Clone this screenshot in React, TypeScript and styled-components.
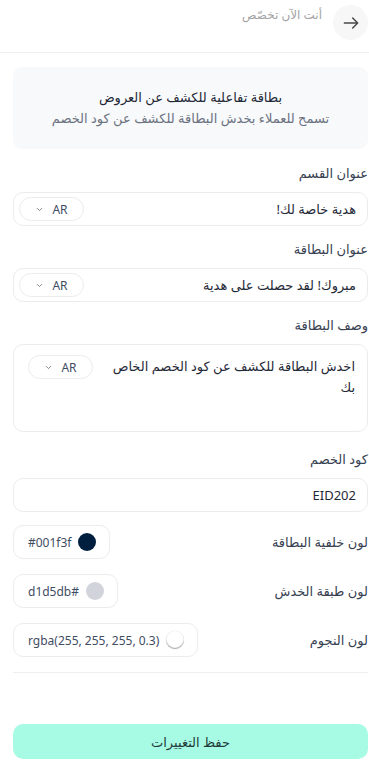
import React from 'react';
import styled, { createGlobalStyle } from 'styled-components';

const GlobalStyle = createGlobalStyle`
  * { box-sizing: border-box; }
  body {
    margin: 0;
    background: #ffffff;
    font-family: "Noto Sans", "DejaVu Sans", sans-serif;
    color: #1f2937;
  }
`;

const Page = styled.div`
  width: 369px;
  direction: rtl;
  overflow: hidden;
`;

const Header = styled.div`
  height: 53px;
  display: flex;
  align-items: flex-start;
  gap: 11px;
  padding: 5px 1px 0 0;
  border-bottom: 1px solid #eeeeee;
`;

const BackButton = styled.div`
  width: 35px;
  height: 35px;
  border-radius: 50%;
  background: #f7f7f7;
  display: flex;
  align-items: center;
  justify-content: center;
  color: #444;
`;

const HeaderText = styled.span`
  font-size: 12px;
  color: #a3a3a3;
  line-height: 20px;
`;

const Content = styled.div`
  padding: 14px 1px 0 13px;
  display: flex;
  flex-direction: column;
`;

const InfoCard = styled.div`
  height: 82px;
  background: #f8f9fb;
  border-radius: 9px;
  display: flex;
  flex-direction: column;
  align-items: center;
  justify-content: center;
  gap: 2px;
  margin-bottom: 14px;
`;

const InfoTitle = styled.div`
  font-size: 13px;
  color: #1f2937;
  line-height: 19px;
`;

const InfoSub = styled.div`
  font-size: 13px;
  color: #6b7280;
  line-height: 19px;
`;

const Field = styled.div<{ $gap?: number }>`
  display: flex;
  flex-direction: column;
  margin-bottom: ${(p) => p.$gap ?? 13}px;
`;

const Label = styled.label`
  font-size: 13px;
  line-height: 20px;
  color: #374151;
  margin-bottom: 9px;
  white-space: nowrap;
`;

const InputBox = styled.div<{ $tall?: boolean }>`
  height: ${(p) => (p.$tall ? 88 : 34)}px;
  border: 1px solid #ececec;
  border-radius: 10px;
  display: flex;
  align-items: ${(p) => (p.$tall ? 'flex-start' : 'center')};
  justify-content: space-between;
  padding: ${(p) => (p.$tall ? '10px 12px 0 14px' : '0 11px 0 5px')};
  font-size: 13px;
  color: #1f2937;
`;

const InputText = styled.span<{ $tall?: boolean }>`
  line-height: 21px;
  padding-top: ${(p) => (p.$tall ? 1 : 0)}px;
  max-width: 252px;
`;

const LangPill = styled.div`
  width: 65px;
  height: 24px;
  border: 1px solid #ececec;
  border-radius: 12px;
  display: flex;
  align-items: center;
  justify-content: center;
  gap: 8px;
  direction: ltr;
  font-size: 12px;
  color: #3f4d63;
  flex-shrink: 0;
`;

const ColorRow = styled.div`
  display: flex;
  align-items: center;
  justify-content: space-between;
  margin-bottom: 15px;
`;

const ColorLabel = styled.span`
  font-size: 13px;
  color: #374151;
`;

const ColorBox = styled.div`
  height: 34px;
  border: 1px solid #ececec;
  border-radius: 10px;
  display: flex;
  align-items: center;
  gap: 7px;
  padding: 0 13px 0 14px;
  font-size: 12px;
  color: #3f4d63;
`;

const Swatch = styled.span<{ $color: string; $ring?: boolean }>`
  width: 18px;
  height: 18px;
  border-radius: 50%;
  background: ${(p) => p.$color};
  box-shadow: ${(p) => (p.$ring ? 'inset 0 -1px 1px rgba(0,0,0,0.35), 0 0 0 0.5px #eee' : 'none')};
  flex-shrink: 0;
`;

const Divider = styled.div`
  height: 1px;
  background: #efefef;
  margin-bottom: 51px;
`;

const SaveButton = styled.button`
  height: 35px;
  border: none;
  border-radius: 10px;
  background: #a7fbe4;
  font-family: inherit;
  font-size: 13px;
  color: #1f3b3b;
  width: 100%;
`;

const Chevron = () => (
  <svg width="9" height="9" viewBox="0 0 24 24" fill="none" stroke="#6b7280" strokeWidth="2.2" strokeLinecap="round" strokeLinejoin="round">
    <path d="M6 9l6 6 6-6" />
  </svg>
);

const Arrow = () => (
  <svg width="20" height="20" viewBox="0 0 24 24" fill="none" stroke="#4a4a4a" strokeWidth="1.8" strokeLinecap="round" strokeLinejoin="round">
    <path d="M4 12h16M14 6l6 6-6 6" />
  </svg>
);

const Lang = () => (
  <LangPill>
    <Chevron />
    <span>AR</span>
  </LangPill>
);

const App = () => {
  return (
    <Page>
      <GlobalStyle />
      <Header>
        <BackButton>
          <Arrow />
        </BackButton>
        <HeaderText>أنت الآن تخصّص</HeaderText>
      </Header>
      <Content>
        <InfoCard>
          <InfoTitle>بطاقة تفاعلية للكشف عن العروض</InfoTitle>
          <InfoSub>تسمح للعملاء بخدش البطاقة للكشف عن كود الخصم</InfoSub>
        </InfoCard>

        <Field>
          <Label>عنوان القسم</Label>
          <InputBox>
            <InputText>هدية خاصة لك!</InputText>
            <Lang />
          </InputBox>
        </Field>

        <Field>
          <Label>عنوان البطاقة</Label>
          <InputBox>
            <InputText>مبروك! لقد حصلت على هدية</InputText>
            <Lang />
          </InputBox>
        </Field>

        <Field $gap={17}>
          <Label>وصف البطاقة</Label>
          <InputBox $tall>
            <InputText $tall>اخدش البطاقة للكشف عن كود الخصم الخاص بك</InputText>
            <Lang />
          </InputBox>
        </Field>

        <Field $gap={13}>
          <Label>كود الخصم</Label>
          <InputBox>
            <InputText>EID202</InputText>
          </InputBox>
        </Field>

        <ColorRow>
          <ColorLabel>لون خلفية البطاقة</ColorLabel>
          <ColorBox>
            <Swatch $color="#001f3f" />
            <span>#001f3f</span>
          </ColorBox>
        </ColorRow>

        <ColorRow>
          <ColorLabel>لون طبقة الخدش</ColorLabel>
          <ColorBox>
            <Swatch $color="#d1d5db" />
            <span>#d1d5db</span>
          </ColorBox>
        </ColorRow>

        <ColorRow>
          <ColorLabel>لون النجوم</ColorLabel>
          <ColorBox>
            <Swatch $color="#ffffff" $ring />
            <span dir="ltr">rgba(255, 255, 255, 0.3)</span>
          </ColorBox>
        </ColorRow>

        <Divider />

        <SaveButton>حفظ التغييرات</SaveButton>
      </Content>
    </Page>
  );
};

export default App;
